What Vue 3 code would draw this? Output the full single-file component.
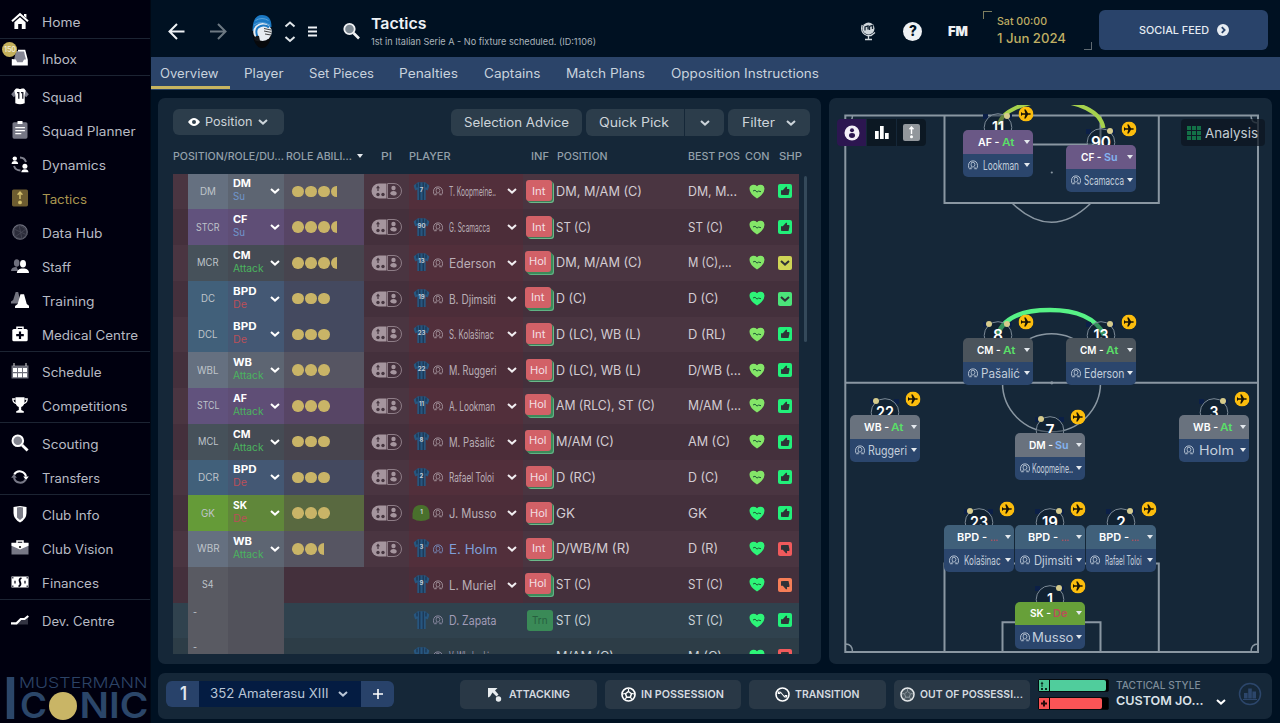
<script setup>
import { h } from "vue";

// Single-line label squeezed or stretched to a fixed width, like the names in the squad list
const FitText = (props) => {
  const size = Number(props.s || 13);
  const height = Math.round(size * 1.3);
  return h("svg", { class: "fit", width: props.w, height }, [
    h(
      "text",
      {
        x: 0,
        y: height / 2 + size * 0.36,
        "font-size": size,
        "font-weight": props.b || 400,
        textLength: props.w,
        lengthAdjust: "spacingAndGlyphs",
        fill: "currentColor",
      },
      props.t
    ),
  ]);
};
FitText.props = ["t", "w", "s", "b"];

const menu = [
  [{ t: "Home", w: 38.5, icon: "home" }],
  [{ t: "Inbox", w: 35, icon: "inbox", badge: "150" }],
  [
    { t: "Squad", w: 40, icon: "squad" },
    { t: "Squad Planner", w: 93.5, icon: "planner" },
    { t: "Dynamics", w: 64, icon: "dynamics" },
    { t: "Tactics", w: 45, icon: "tactics", active: true },
    { t: "Data Hub", w: 60.5, icon: "data" },
    { t: "Staff", w: 29, icon: "staff" },
    { t: "Training", w: 52.5, icon: "training" },
    { t: "Medical Centre", w: 96, icon: "medical" },
  ],
  [
    { t: "Schedule", w: 59.5, icon: "schedule" },
    { t: "Competitions", w: 85.5, icon: "trophy" },
  ],
  [
    { t: "Scouting", w: 56.5, icon: "search" },
    { t: "Transfers", w: 58, icon: "transfers" },
  ],
  [
    { t: "Club Info", w: 57.5, icon: "shield" },
    { t: "Club Vision", w: 71.5, icon: "vision" },
    { t: "Finances", w: 57, icon: "finances" },
  ],
  [{ t: "Dev. Centre", w: 72.5, icon: "dev" }],
];

const tabs = [
  { t: "Overview", w: 58.5, active: true },
  { t: "Player", w: 39.5 },
  { t: "Set Pieces", w: 65 },
  { t: "Penalties", w: 59 },
  { t: "Captains", w: 56.5 },
  { t: "Match Plans", w: 79 },
  { t: "Opposition Instructions", w: 148 },
];

const headers = [
  { t: "POSITION/ROLE/DU...", w: 111 },
  { t: "ROLE ABILI...", w: 66, sort: true },
  { t: "PI", w: 11 },
  { t: "PLAYER", w: 41.5 },
  { t: "INF", w: 18 },
  { t: "POSITION", w: 50.5 },
  { t: "BEST POS", w: 52 },
  { t: "CON", w: 24.5 },
  { t: "SHP", w: 23 },
];

const duties = { Su: 12, Attack: 30.5, De: 14 };
const infWidths = { Int: 13.5, Hol: 17.5, Trn: 15.5 };

const players = [
  { kind: "dm", pos: "DM", pw: 16, role: "DM", rw: 18, duty: "Su", stars: 3.5, no: 7, name: "T. Koopmeine..", nw: 47, inf: "Int", at: "DM, M/AM (C)", aw: 86, best: "DM, M...", bw: 49, con: "lime", shp: "up" },
  { kind: "st", pos: "STCR", pw: 23.5, role: "CF", rw: 14.5, duty: "Su", stars: 3.5, no: 90, name: "G. Scamacca", nw: 41, inf: "Int", at: "ST (C)", aw: 35, best: "ST (C)", bw: 35, con: "lime", shp: "up" },
  { kind: "cm", pos: "MCR", pw: 21.5, role: "CM", rw: 17.5, duty: "Attack", stars: 3.5, no: 13, name: "Ederson", nw: 47, inf: "Hol", deep: true, at: "DM, M/AM (C)", aw: 86, best: "M (C),...", bw: 43.5, con: "lime", shp: "flat" },
  { kind: "bpd", pos: "DC", pw: 14, role: "BPD", rw: 23.5, duty: "De", stars: 3, no: 19, name: "B. Djimsiti", nw: 47, inf: "Int", deep: true, at: "D (C)", aw: 30.5, best: "D (C)", bw: 30.5, con: "green", shp: "ok" },
  { kind: "bpd", pos: "DCL", pw: 19.5, role: "BPD", rw: 23.5, duty: "De", stars: 3, no: 23, name: "S. Kolašinac", nw: 45, inf: "Int", at: "D (LC), WB (L)", aw: 85, best: "D (RL)", bw: 38, con: "lime", shp: "up" },
  { kind: "dm", pos: "WBL", pw: 21.5, role: "WB", rw: 19, duty: "Attack", stars: 3, no: 22, name: "M. Ruggeri", nw: 47.5, inf: "Hol", at: "D (LC), WB (L)", aw: 85, best: "D/WB (...", bw: 53, con: "lime", shp: "up" },
  { kind: "st", pos: "STCL", pw: 22.5, role: "AF", rw: 14, duty: "Attack", stars: 3, no: 11, name: "A. Lookman", nw: 46, inf: "Hol", deep: true, at: "AM (RLC), ST (C)", aw: 99, best: "M/AM (...", bw: 53, con: "lime", shp: "up" },
  { kind: "cm", pos: "MCL", pw: 20.5, role: "CM", rw: 17.5, duty: "Attack", stars: 3, no: 8, name: "M. Pašalić", nw: 46, inf: "Hol", deep: true, at: "M/AM (C)", aw: 58, best: "AM (C)", bw: 42, con: "lime", shp: "up" },
  { kind: "bpd", pos: "DCR", pw: 21, role: "BPD", rw: 23.5, duty: "De", stars: 3, no: 2, name: "Rafael Toloi", nw: 45, inf: "Hol", at: "D (RC)", aw: 40, best: "D (C)", bw: 30.5, con: "lime", shp: "up" },
  { kind: "gk", pos: "GK", pw: 14, role: "SK", rw: 14, duty: "De", stars: 3, no: 1, name: "J. Musso", nw: 47.5, inf: "Hol", at: "GK", aw: 19, best: "GK", bw: 19, con: "green", shp: "up" },
  { kind: "dm", pos: "WBR", pw: 22.5, role: "WB", rw: 19, duty: "Attack", stars: 2.5, no: 3, name: "E. Holm", nw: 48.5, inf: "Int", at: "D/WB/M (R)", aw: 74, best: "D (R)", bw: 30, con: "green", shp: "down", loan: true },
  { kind: "sub", pos: "S4", pw: 11.5, no: 9, name: "L. Muriel", nw: 47, inf: "Hol", deep: true, at: "ST (C)", aw: 35, best: "ST (C)", bw: 35, con: "green", shp: "warn" },
  { kind: "sub", pos: "-", pw: 4, name: "D. Zapata", nw: 47.5, inf: "Trn", at: "ST (C)", aw: 35, best: "ST (C)", bw: 35, con: "green", shp: "up", out: true },
  { kind: "sub", pos: "-", pw: 4, name: "V. Włodarski", nw: 40, at: "M/AM (C)", aw: 58, best: "M (C)", bw: 34, con: "green", shp: "down", out: true },
];

const tokens = [
  { x: 963, y: 130, no: 11, nw: 12, kind: "st", role: "AF -", rw: 21.5, duty: "At", name: "Lookman", w: 36, dots: "r" },
  { x: 1066, y: 145, no: 90, nw: 20, kind: "st", role: "CF -", rw: 20.5, duty: "Su", name: "Scamacca", w: 40, dots: "r" },
  { x: 963, y: 338, no: 8, nw: 10, kind: "cm", role: "CM -", rw: 23.5, duty: "At", name: "Pašalić", w: 39, dots: "lr" },
  { x: 1066, y: 338, no: 13, nw: 15, kind: "cm", role: "CM -", rw: 23.5, duty: "At", name: "Ederson", w: 40.5, dots: "r" },
  { x: 850, y: 415, no: 22, nw: 18, kind: "dm", role: "WB -", rw: 25, duty: "At", name: "Ruggeri", w: 39, dots: "l" },
  { x: 1015, y: 433, no: 7, nw: 9, kind: "dm", role: "DM -", rw: 24, duty: "Su", name: "Koopmeine..", w: 41, dots: "l" },
  { x: 1179, y: 415, no: 3, nw: 9, kind: "dm", role: "WB -", rw: 25, duty: "At", name: "Holm", w: 35, dots: "r" },
  { x: 944, y: 525, no: 23, nw: 18, kind: "bpd", role: "BPD -", rw: 30, duty: "...", name: "Kolašinac", w: 36.5, dots: "l" },
  { x: 1015, y: 525, no: 19, nw: 16, kind: "bpd", role: "BPD -", rw: 30, duty: "...", name: "Djimsiti", w: 38.5, dots: "r" },
  { x: 1085.5, y: 525, no: 2, nw: 9.5, kind: "bpd", role: "BPD -", rw: 30, duty: "...", name: "Rafael Toloi", w: 36.5, dots: "r" },
  { x: 1015, y: 601.5, no: 1, nw: 6, kind: "gk", role: "SK -", rw: 21, duty: "De", name: "Musso", w: 41.5, dots: "r" },
];
const tokenDuty = { At: 12.5, Su: 13.5, De: 14.5, "...": 8 };
const dutyClass = { Su: "su", At: "at", Attack: "at", De: "de", "...": "de" };

const phases = [
  { t: "ATTACKING", w: 61, icon: "attack" },
  { t: "IN POSSESSION", w: 83, icon: "ball" },
  { t: "TRANSITION", w: 64.5, icon: "swap" },
  { t: "OUT OF POSSESSI...", w: 103, icon: "balldim" },
];
</script>

<template>
  <div class="app">
    <svg class="sprite" width="0" height="0">
      <symbol id="home" viewBox="0 0 18 18"><path d="M1 9.3 9 2.2l8 7.1" fill="none" stroke="#fff" stroke-width="2" /><path d="M13 2h2.4v4L13 4z" fill="#fff" /><path d="M3.4 10.2 9 5.3l5.6 4.9V17h-3.8v-5H7.2v5H3.4z" fill="#fff" /></symbol>
      <symbol id="inbox" viewBox="0 0 18 18"><path d="M5 2h8.500L15 11l-3 4H6l-3-4z" fill="#858694" /><path d="M7 .8h7.2l2.600 10v5.700H.8V10l4 .4 1.400 2.800h5.400l1.400-2.800h1.800L13 2.600H7z" fill="#fff" /></symbol>
      <symbol id="squad" viewBox="0 0 18 18"><path d="m4.5 2.2-4.3 5 2.6 3 2-2z" fill="#777887" /><path d="m13.5 2.2 4.3 5-2.6 3-2-2z" fill="#777887" /><path d="M5 1.4h2.2q1.8 1.2 3.6 0H13l1.7 2-1 4.6v8.2q-4.7 2-9.4 0V8l-1-4.6z" fill="#fff" /><path d="M6 5.7h1.8v6M10 5.7h1.8v6" fill="none" stroke="#191927" stroke-width="1.3" /></symbol>
      <symbol id="planner" viewBox="0 0 18 18"><rect x="1.5" y="1.2" width="15" height="16.5" rx="1.6" fill="#767785" /><path d="M6.5 0h5v3h-5zM4.3 6h9.6v1.3H4.3zM4.3 9h9.6v1.3H4.3zM4.3 12h6v1.3h-6z" fill="#fff" /></symbol>
      <symbol id="dynamics" viewBox="0 0 18 18"><path d="M9 2.5a6.5 6.5 0 0 1 6 4.5M9.5 15.5A6.8 6.8 0 0 1 3 11" fill="none" stroke="#7f808d" stroke-width="2" /><circle cx="3.8" cy="3.6" r="2.2" fill="#fff" /><path d="M.6 9q0-3 3.2-3t3.4 3zM10.3 17.2q.2-3 3.6-3t3.6 3z" fill="#fff" /><circle cx="13.9" cy="11.2" r="2.5" fill="#fff" /></symbol>
      <symbol id="tactics" viewBox="0 0 18 18"><rect x="1" y=".6" width="16" height="16.8" rx="1.6" fill="#6d5c30" /><path d="M9 10V4M6.6 5.7 9 3.2l2.4 2.5" fill="none" stroke="#d2be6c" stroke-width="1.5" /><circle cx="9" cy="13.4" r="1.9" fill="#d2be6c" /></symbol>
      <symbol id="data" viewBox="0 0 18 18"><circle cx="9" cy="9" r="7.2" fill="#2b2c3a" stroke="#6d6f7c" stroke-width="1.2" /><path d="m3 6 5-4 7 4 1 6-5 4-7-2zM8 2l3 14M3 6l13 6M15 6 4 14" fill="none" stroke="#474957" stroke-width=".8" /></symbol>
      <symbol id="staff" viewBox="0 0 18 18"><ellipse cx="5.7" cy="6" rx="2.8" ry="3.8" fill="#6f707e" /><path d="M0 14q0-4 5.5-4l2 4z" fill="#6f707e" /><ellipse cx="12" cy="6.8" rx="3" ry="3.8" fill="#fff" /><path d="M5.8 16q.4-3.5 4.7-4.4h3Q18 12.500 18 16z" fill="#fff" /></symbol>
      <symbol id="training" viewBox="0 0 20 18"><path d="M5.200 0h2.800l3 13H0v-2.400L2.400 9z" fill="#72737f" /><path d="M10.500 2.500h4l3 11 3 2.300V18H4.500v-2.200l2.900-2.300z" fill="#fff" /></symbol>
      <symbol id="medical" viewBox="0 0 18 18"><path d="M6 4.500V2.200h6v2.300" fill="none" stroke="#fff" stroke-width="1.500" /><rect x="1.300" y="4" width="15.400" height="12.300" rx="1.600" fill="#fff" /><path d="M7.900 6.500h2.200v2.600h2.700v2.200h-2.700v2.600H7.900v-2.600H5.200V9.100h2.700z" fill="#000010" /></symbol>
      <symbol id="schedule" viewBox="0 0 18 18"><path d="M.5 3.500h17v13H.5z" fill="#6d6e7a" /><path d="M3 1v3M15 1v3" stroke="#ddd" stroke-width="1" /><path d="M2 6h4v4H2zM7 6h4v4H7zM12 6h4v4h-4zM2 11.200h4v4H2zM7 11.200h4v4H7zM12 11.200h4v4h-4z" fill="#fff" /></symbol>
      <symbol id="trophy" viewBox="0 0 18 18"><path d="M4.500 1.300h9v4.200q0 4.300-3.300 5.500v3l2.600 1.300v1.500H5.200v-1.500l2.600-1.300v-3Q4.500 9.800 4.500 5.500z" fill="#fff" /><path d="M4.500 3H1.800q.2 4 3.700 4.500M13.500 3h2.700q-.2 4-3.700 4.500" fill="none" stroke="#fff" stroke-width="1.300" /></symbol>
      <symbol id="search" viewBox="0 0 18 18"><circle cx="6.800" cy="6.800" r="5.300" fill="#83858f" stroke="#fff" stroke-width="2" /><path d="m11 11 5.600 5.600" stroke="#fff" stroke-width="2.800" /></symbol>
      <symbol id="transfers" viewBox="0 0 18 18"><path d="M3.200 6.500A6.400 6.400 0 0 1 15 8.500" fill="none" stroke="#fff" stroke-width="2" /><path d="M12.200 8.500h5.600L15 12z" fill="#fff" /><path d="M14.800 11.500A6.400 6.400 0 0 1 3 9.500" fill="none" stroke="#777887" stroke-width="2" /><path d="M.2 9.800h5.600L3 6z" fill="#777887" /></symbol>
      <symbol id="shield" viewBox="0 0 18 18"><path d="M2.500 2 9 1l6.500 1v6q0 6-6.500 9.500Q2.500 14 2.500 8z" fill="#fff" /><path d="M6 2.500 9 2l3 .5v10L9 15l-3-2.500z" fill="#7c7d88" /></symbol>
      <symbol id="vision" viewBox="0 0 18 18"><path d="M6 4V2h6v2" fill="none" stroke="#fff" stroke-width="1.500" /><path d="M.5 4h17v11.500H.5z" fill="#777886" /><path d="M.5 3.800h17v3L9 10.500.5 6.800z" fill="#fff" /><circle cx="9" cy="8" r="1.100" fill="#111" /></symbol>
      <symbol id="finances" viewBox="0 0 18 18"><path d="M.5 3.500h17v11H.5z" fill="#fff" /><path d="M4 7.800v2.800M14 7.800v2.800" stroke="#000010" stroke-width="1.200" /><path d="M1 4h1.500v1.500H1zM15.500 4H17v1.500h-1.500zM1 12.500h1.500V14H1zM15.500 12.500H17V14h-1.500z" fill="#4c4d5a" /><path d="M10.500 5Q7.500 6 9 9t-1.500 4.500" fill="none" stroke="#000010" stroke-width="1.800" /></symbol>
      <symbol id="dev" viewBox="0 0 18 18"><path d="M2 13.500 9 10l8-5v8.500z" fill="#333442" /><path d="M0 12.300h5.500L9.800 8h3.700L17.300 5" fill="none" stroke="#fff" stroke-width="2.200" /></symbol>
      <symbol id="chev" viewBox="0 0 10 6"><path d="m1 1 4 3.600L9 1" fill="none" stroke="currentColor" stroke-width="2" /></symbol>
      <symbol id="person" viewBox="0 0 10 10"><path d="M1.200 8.500Q.5 7.500.5 5.500.8.900 5 .9t4.500 4.600q0 2-.7 3" fill="none" stroke="currentColor" stroke-width=".9" /><path d="M5 2.300q1.900.1 1.900 2.200T5 7.100 3.100 4.500 5 2.300z" fill="none" stroke="currentColor" stroke-width=".8" /><path d="M.9 9.200Q1.500 7.500 3.700 7v2.200zM9.100 9.200Q8.500 7.500 6.300 7v2.200z" fill="currentColor" opacity=".75" /></symbol>
      <symbol id="shirt" viewBox="0 0 16 20"><path d="M4.500 1.200h7L16 4.500 14.300 9.500l-2.100-1V19H3.800V8.500l-2.100 1L0 4.500z" fill="#27567f" /><path d="M6.300 1.500V19M9.700 1.500V19M3.500 2.500v4M12.500 2.500v4" stroke="#1b304a" stroke-width="1.100" /></symbol>
      <symbol id="gkshirt" viewBox="0 0 18 18"><path d="M.5 14.500V9.500Q1 1 9 1t8.500 8.500v5Q13.500 17 9 17T.5 14.500z" fill="#49702c" /></symbol>
      <symbol id="heart" viewBox="0 0 16 15"><path d="M8 14.500Q.5 9.500.5 4.700.6 1.200 4 .8 6.700.7 8 2.200 9.300.7 12 .8q3.400.4 3.500 3.900Q15.500 9.500 8 14.500z" fill="currentColor" /><path d="M4 7 6 6.200l2 1.900 1.600-1 2.400.6" fill="none" stroke="#1f5a36" stroke-width="1" /></symbol>
      <symbol id="thumb" viewBox="0 0 14 14"><path d="M3 6.300h1.800L8.200 2.500q1.500.4.700 2.600H11q.7.200.4 2L10.500 11H5.500L3 10.700z" fill="#2f3237" /></symbol>
      <symbol id="pi" viewBox="0 0 31 16"><path d="M15.500.5H8A7.500 7.500 0 0 0 8 15.500h7.500z" fill="#a5959e" /><path d="M16.500.5H23a7.500 7.500 0 0 1 0 15h-6.500z" fill="none" stroke="#8e7d87" /><g fill="#45353f"><path d="M7 2.500 9 5.300H5zM6.400 5h1.200v3H6.400z" /><circle cx="7" cy="11.500" r="1.700" /><circle cx="12" cy="11.500" r="1.700" /></g><circle cx="22.500" cy="5" r="2.200" fill="#a5959e" /><path d="M19.300 10.500q0-2.500 3.200-2.500t3.200 2.500-3.200 2-3.200-2z" fill="#a5959e" /></symbol>
      <symbol id="plane" viewBox="0 0 15 15"><circle cx="7.500" cy="7.500" r="7.500" fill="#fcbd0d" /><path d="M2.500 5.500 4 6.800h2.800L5.700 3h1.500L9.500 6.800h2.200q1.500.7 0 1.400H9.500L7.200 12H5.700l1.100-3.800H4L2.500 9.500z" fill="#171307" /></symbol>
      <symbol id="attack" viewBox="0 0 15 15"><path d="M1 1h9.500L8 3.500l3.500 4-2 2-4-4L3 9.500l-2 1z" fill="#e8ecef" /><circle cx="11.500" cy="12" r="2.700" fill="#e8ecef" /></symbol>
      <symbol id="ball" viewBox="0 0 15 15"><circle cx="7.500" cy="7.500" r="6.500" fill="#26343f" stroke="#fff" stroke-width="1.700" /><path d="m7.500 4.500 3 2.200-1.200 3.500H5.700L4.500 6.700z" fill="none" stroke="#fff" stroke-width="1.500" /><path d="M7.500 2v2M2 7l2-.5M13 7l-2-.5M4.300 12l1.200-1.700M10.700 12 9.500 10.300" stroke="#fff" stroke-width="1.200" /></symbol>
      <symbol id="swap" viewBox="0 0 15 15"><circle cx="7.500" cy="7.500" r="6.500" fill="none" stroke="#fff" stroke-width="1.600" /><path d="M3.500 6q1-1.800 2.300-.5l3.400 4q1.300 1.300 2.300-.5M3.300 4.500v2h2M11.700 10.500v-2h-2" fill="none" stroke="#fff" stroke-width="1.100" /></symbol>
      <symbol id="balldim" viewBox="0 0 15 15"><circle cx="7.500" cy="7.500" r="6.500" fill="#49565f" stroke="#e4e7e9" stroke-width="1.500" /><path d="m7.500 4.500 3 2.200-1.200 3.500H5.700L4.500 6.700zM7.500 2v2M2 7l2-.5M13 7l-2-.5M4.300 12l1.200-1.700M10.700 12 9.500 10.300" fill="none" stroke="#8d979e" stroke-width="1" /></symbol>
    </svg>

    <aside class="sidebar">
      <div v-for="(group, g) in menu" :key="g" class="menu-group">
        <div v-for="item in group" :key="item.t" class="menu-item" :class="{ active: item.active }">
          <span class="menu-icon">
            <svg width="18" height="18"><use :href="'#' + item.icon" /></svg>
            <span v-if="item.badge" class="menu-badge"><FitText :t="item.badge" w="12" s="7" b="600" /></span>
          </span>
          <FitText :t="item.t" :w="item.w" s="12.800" />
        </div>
      </div>
      <svg class="brand" width="150" height="54" viewBox="0 669 150 54">
        <text x="3.500" y="718.500" font-size="57.500" font-weight="700" fill="#2b4669" textLength="14" lengthAdjust="spacingAndGlyphs">I</text>
        <text x="19" y="687.500" font-size="15" font-weight="300" fill="#2c4366" textLength="128.500" lengthAdjust="spacingAndGlyphs">MUSTERMANN</text>
        <text x="20" y="718" font-size="35" font-weight="600" fill="#2b4669" textLength="27" lengthAdjust="spacingAndGlyphs">C</text>
        <circle cx="63" cy="706" r="14" fill="#c9b566" />
        <text x="79.500" y="718" font-size="35" font-weight="600" fill="#2b4669" textLength="69" lengthAdjust="spacingAndGlyphs">NIC</text>
      </svg>
    </aside>

    <div class="main">
      <header class="topbar">
        <svg class="nav" width="220" height="56" viewBox="151 0 220 56">
          <g fill="none" stroke-width="2">
            <path d="M184.500 31.500H170M177 24l-7.500 7.500L177 39" stroke="#eef2f5" />
            <path d="M210 31.500h15M218 24l7.500 7.500L218 39" stroke="#6c7882" />
            <path d="m285.500 26.500 4.500-4 4.500 4M285.500 37l4.500 4 4.500-4" stroke="#dfe5e9" />
            <path d="M308 27.500h9M308 31.500h9M308 35.500h9" stroke="#eef2f5" />
          </g>
          <!-- club crest -->
          <ellipse cx="262" cy="31.500" rx="9.500" ry="16.500" fill="#07090c" />
          <path d="M252.500 31q0-16 9.500-16t9.500 12z" fill="#1b79c4" />
          <path d="M255.500 20.500q6.500-4 13 0M254 25q7-5 16 0" fill="none" stroke="#58a2da" stroke-width="1" />
          <ellipse cx="262.500" cy="32" rx="9.300" ry="9" fill="#e8edf2" />
          <path d="M258 38q-5-11 5-12.500 4-.3 6 2" fill="none" stroke="#1b79c4" stroke-width="2" />
          <path d="M264 28.500l7 1.500M264 31l7.500 1.500M265 34l6 1" stroke="#444" stroke-width="1" />
          <path d="M254 39q1.500-4 5-3l1 5q-4 1-6-2z" fill="#15171a" />
          <circle cx="349.500" cy="29" r="5.200" fill="#7b8791" stroke="#f0f2f4" stroke-width="1.800" />
          <path d="m353.500 33 5.500 5.500" stroke="#f0f2f4" stroke-width="2.600" />
        </svg>
        <div class="title">
          <FitText t="Tactics" w="55.500" s="15" b="600" />
          <FitText class="subtitle" t="1st in Italian Serie A - No fixture scheduled. (ID:1106)" w="225" s="9.300" />
        </div>
        <div class="status">
          <svg width="16" height="20" viewBox="1 0 16 20"><circle cx="9.500" cy="7.500" r="6" fill="#cfd6db" /><path d="M3.200 4Q1 12 8 14.500h4l4-3M9.500 15v3.500M6 18.500h7" fill="none" stroke="#cfd6db" stroke-width="1.300" /><path d="M6 9.500V6l3-1v3.500M10.500 9V5.500l3-1V8" fill="none" stroke="#142433" stroke-width="1.300" /></svg>
          <span class="help"><FitText t="?" w="8" s="14" b="800" /></span>
          <FitText t="FM" w="20" s="12.500" b="900" />
        </div>
        <div class="date">
          <FitText t="Sat 00:00" w="50" s="10.300" b="500" />
          <FitText t="1 Jun 2024" w="69" s="12.800" b="500" />
        </div>
        <div class="social">
          <FitText t="SOCIAL FEED" w="70" s="10.500" b="500" />
          <svg width="12" height="12" viewBox="0 0 12 12"><circle cx="6" cy="6" r="6" fill="#e6ecf2" /><path d="m4.800 3.200 2.800 2.800-2.800 2.800" fill="none" stroke="#29436a" stroke-width="1.800" /></svg>
        </div>
      </header>

      <nav class="tabs">
        <div v-for="tab in tabs" :key="tab.t" class="tab" :class="{ active: tab.active }">
          <FitText :t="tab.t" :w="tab.w" s="12.700" />
        </div>
      </nav>

      <div class="panels">
        <section class="panel squad">
          <div class="toolbar">
            <div class="btn position">
              <svg width="12" height="8" viewBox="0 0 12 8"><path d="M0 4q6-8 12 0-6 8-12 0z" fill="#fff" /><circle cx="6" cy="4" r="2" fill="#31414e" /></svg>
              <FitText t="Position" w="47.500" s="12" />
              <svg width="10" height="6"><use href="#chev" /></svg>
            </div>
            <div class="btn advice"><FitText t="Selection Advice" w="105" s="12.800" /></div>
            <div class="btn pick">
              <span class="pick-label"><FitText t="Quick Pick" w="70" s="12.800" /></span>
              <span class="pick-arrow"><svg width="10" height="6"><use href="#chev" /></svg></span>
            </div>
            <div class="btn filter">
              <FitText t="Filter" w="33" s="12.800" />
              <svg width="10" height="6"><use href="#chev" /></svg>
            </div>
          </div>

          <div class="table-head">
            <span v-for="(head, i) in headers" :key="i" class="head-cell">
              <FitText :t="head.t" :w="head.w" s="10.300" b="500" />
              <i v-if="head.sort" class="caret"></i>
            </span>
          </div>

          <div class="table-area">
            <div class="table">
              <div v-for="(p, i) in players" :key="i" class="row" :class="[p.kind, { out: p.out }]">
                <span></span>
                <span class="pos"><FitText :t="p.pos" :w="p.pw" s="10" /></span>
                <span class="role">
                  <span v-if="p.role" class="role-text">
                    <FitText :t="p.role" :w="p.rw" s="10.500" b="700" />
                    <FitText :class="dutyClass[p.duty]" :t="p.duty" :w="duties[p.duty]" s="9.800" />
                  </span>
                  <svg v-if="p.role" width="10" height="6"><use href="#chev" /></svg>
                </span>
                <span class="ability">
                  <template v-if="p.stars">
                    <i v-for="n in Math.floor(p.stars)" :key="n" class="star"></i>
                    <i v-if="p.stars % 1" class="star half"></i>
                  </template>
                </span>
                <span class="pi"><svg v-if="p.role" width="31" height="16"><use href="#pi" /></svg></span>
                <span class="player" :class="{ loan: p.loan }">
                  <svg class="kit" width="19" height="20">
                    <use v-if="p.kind === 'gk'" href="#gkshirt" width="18" height="18" y="1" />
                    <use v-else href="#shirt" width="16" height="20" x="1.500" />
                    <text v-if="p.no" x="9.500" y="11" text-anchor="middle" font-size="6" font-weight="700" fill="#c3ccd6">{{ p.no }}</text>
                  </svg>
                  <svg class="face" width="10" height="10"><use href="#person" /></svg>
                  <span class="name"><FitText :t="p.name" :w="p.nw" s="12.500" /></span>
                  <svg v-if="!p.out" class="open" width="10" height="6"><use href="#chev" /></svg>
                </span>
                <span class="inf"><span v-if="p.inf" class="tag" :class="[p.inf.toLowerCase(), { deep: p.deep }]"><FitText :t="p.inf" :w="infWidths[p.inf]" s="10.800" /></span></span>
                <span><FitText :t="p.at" :w="p.aw" s="12.800" /></span>
                <span><FitText :t="p.best" :w="p.bw" s="12.800" /></span>
                <span class="con" :class="p.con"><svg width="16" height="15"><use href="#heart" /></svg></span>
                <span class="shp">
                  <span class="sharp" :class="p.shp">
                    <svg v-if="p.shp === 'flat' || p.shp === 'ok'" width="10" height="6"><use href="#chev" /></svg>
                    <svg v-else width="14" height="14"><use href="#thumb" /></svg>
                  </span>
                </span>
              </div>
            </div>
            <div class="scrollbar"></div>
          </div>
        </section>

        <section class="panel pitch">
          <svg class="field" width="443" height="566" viewBox="829 98 443 566">
            <g fill="none" stroke="#8a97a2" stroke-width="2">
              <rect x="845.300" y="115.500" width="412.700" height="536.500" />
              <path d="M845 382.800h413M944.500 115.500V203h214.300v-87.500M1002.500 115.500v29h98v-29M944.500 652v-88.500h214.300V652M1002.500 652v-29.700h98V652" />
              <circle cx="1051.500" cy="382.800" r="49" stroke-width="1.500" />
              <path d="M1012.500 203.500q39 37.500 78 0M845.500 644q7 0 7 8M1258 644q-7 0-7 8M1258 123q-7 0-7-7.500M845.500 123q7 0 7-7.500" stroke-width="1.500" />
            </g>
            <circle cx="1051.800" cy="172.500" r="1.100" fill="#8a97a2" />
            <circle cx="1051.800" cy="382.800" r="1.600" fill="#8a97a2" />
            <clipPath id="arcs"><rect x="829" y="105" width="443" height="300" /></clipPath>
            <path d="M999 125c2-14 26-24 52-24s50 10 52.500 27" fill="none" stroke="#a6d24d" stroke-width="4" clip-path="url(#arcs)" />
            <path d="M998 334c6-17 26-24 52-24s46 8 54 25" fill="none" stroke="#57f286" stroke-width="4.500" />
          </svg>

          <div class="view-modes">
            <span class="mode on"><svg width="16" height="16" viewBox="0 0 16 16"><circle cx="8" cy="8" r="7.500" fill="#f3eff7" /><circle cx="8" cy="5.200" r="2" fill="#2c1650" /><ellipse cx="8" cy="10.500" rx="3" ry="2.400" fill="#2c1650" /></svg></span>
            <span class="mode"><svg width="14" height="13" viewBox="0 0 14 13"><path d="M0 5h3.700v8H0zM5 0h3.700v13H5zM10 7h3.700v6H10z" fill="#fff" /></svg></span>
            <span class="mode"><svg width="17" height="17" viewBox="0 0 17 17"><rect width="17" height="17" rx="2" fill="#92979c" /><path d="M8.500 10V4M6.500 5.300l2-2.300 2 2.300" fill="none" stroke="#fff" stroke-width="1.400" /><circle cx="8.500" cy="12.800" r="1.500" fill="#fff" /></svg></span>
          </div>

          <div class="analysis">
            <svg width="14" height="14" viewBox="0 0 14 14"><path d="M0 0h4v4H0zM5 0h4v4H5zM10 0h4v4h-4zM0 5h4v4H0zM5 5h4v4H5zM10 5h4v4h-4zM0 10h4v4H0zM5 10h4v4H5zM10 10h4v4h-4z" fill="#137047" /></svg>
            <FitText t="Analysis" w="53" s="13" />
          </div>

          <div v-for="(t, i) in tokens" :key="i" class="token" :class="t.kind" :style="{ left: t.x - 829 + 'px', top: t.y - 98 - 24 + 'px' }">
            <svg class="disc" width="72" height="38">
              <rect x="20" y="8" width="5" height="5" fill="#0b1f47" />
              <rect x="44" y="8" width="5" height="5" fill="#0b1f47" />
              <circle cx="35" cy="21.500" r="13.800" fill="rgba(14, 29, 44, 0.45)" stroke="#7c8a97" stroke-width="1" />
              <circle v-if="t.dots.includes('l')" cx="26" cy="10" r="3" fill="#d6cb8c" />
              <circle v-if="t.dots.includes('r')" cx="44" cy="10" r="3" fill="#d6cb8c" />
              <text :x="35 - t.nw / 2" y="27" font-size="15.500" font-weight="600" fill="#fff" :textLength="t.nw" lengthAdjust="spacingAndGlyphs">{{ t.no }}</text>
              <use href="#plane" x="55.500" y=".5" width="15" height="15" />
            </svg>
            <div class="card">
              <div class="card-role">
                <span class="card-label">
                  <FitText :t="t.role" :w="t.rw" s="10.500" b="600" />
                  <FitText :class="dutyClass[t.duty]" :t="t.duty" :w="tokenDuty[t.duty]" s="10.500" b="600" />
                </span>
                <i class="caret"></i>
              </div>
              <div class="card-name">
                <svg width="10" height="10"><use href="#person" /></svg>
                <span class="card-label"><FitText :t="t.name" :w="t.w" s="12.500" /></span>
                <i class="caret"></i>
              </div>
            </div>
          </div>
        </section>
      </div>

      <footer class="panel bottom">
        <div class="tactic">
          <span class="slot"><FitText t="1" w="7" s="18" b="600" /></span>
          <span class="tactic-name">
            <FitText t="352 Amaterasu XIII" w="118.500" s="12.800" />
            <svg width="10" height="6"><use href="#chev" /></svg>
          </span>
          <span class="add"><svg width="10" height="10" viewBox="0 0 10 10"><path d="M5 0v10M0 5h10" stroke="#fff" stroke-width="1.600" /></svg></span>
        </div>
        <div class="phases">
          <div v-for="phase in phases" :key="phase.t" class="phase">
            <svg width="15" height="15"><use :href="'#' + phase.icon" /></svg>
            <FitText :t="phase.t" :w="phase.w" s="10.500" b="600" />
          </div>
        </div>
        <div class="meters">
          <div class="meter good"><svg width="10" height="11" viewBox="0 0 10 11"><path d="M3 1.500 4.500 4h-1v3h-1V4h-1zM2 8h2v2H2zM6 8h2v2H6z" fill="#0b2b20" /></svg><i></i></div>
          <div class="meter bad"><svg width="10" height="11" viewBox="0 0 10 11"><path d="M4 2.500h2v2h2v2H6v2H4v-2H2v-2h2z" fill="#260909" /></svg><i></i></div>
        </div>
        <div class="style-box">
          <FitText class="style-label" t="TACTICAL STYLE" w="84.500" s="10.500" b="500" />
          <FitText t="CUSTOM JO..." w="87.500" s="12.200" b="600" />
        </div>
        <svg class="style-open" width="10" height="6"><use href="#chev" /></svg>
        <svg class="stats" width="24" height="24" viewBox="0 0 24 24"><circle cx="12" cy="12" r="10.500" fill="none" stroke="#2c466b" stroke-width="1.500" /><path d="M6 11h3.600v5.500H6zM10.200 6.500h3.600v10h-3.600zM14.400 9.500H18v7h-3.600zM5 17h14v1H5z" fill="#2c466b" /></svg>
      </footer>
    </div>
  </div>
</template>

<style>
body {
  background: #001122;
}
.fit {
  display: block;
  flex: none;
  overflow: visible;
}
</style>

<style scoped>
.app {
  display: flex;
  width: 1280px;
  height: 723px;
  overflow: hidden;
  background: #001122;
  color: #ccd4da;
  font-family: Inter, "Open Sans", sans-serif;
}
.app svg {
  flex: none;
}
.sprite {
  position: absolute;
}

/* sidebar */
.sidebar {
  display: flex;
  flex-direction: column;
  width: 151px;
  height: 723px;
  box-sizing: border-box;
  padding-top: 1px;
  background: #00000f;
  color: #b7bac3;
  border-right: 1px solid #000814;
}
.menu-group {
  padding-top: 2.5px;
  border-bottom: 1px solid #1c2433;
}
.menu-group:nth-last-of-type(1) {
  border-bottom: 0;
}
.menu-item {
  display: flex;
  align-items: center;
  gap: 12.500px;
  height: 34px;
  box-sizing: border-box;
  padding: 3px 0 0 11px;
}
.menu-item.active {
  color: #a8954f;
}
.menu-icon {
  position: relative;
  display: flex;
  margin-top: -3px;
}
.menu-badge {
  position: absolute;
  left: -9px;
  top: -7px;
  display: flex;
  align-items: center;
  justify-content: center;
  width: 15px;
  height: 15px;
  border-radius: 50%;
  background: #c4b05c;
  color: #f2ecd2;
}
.brand {
  margin-top: auto;
  overflow: visible;
}

/* top bar */
.main {
  display: flex;
  flex-direction: column;
  width: 1129px;
}
.topbar {
  display: flex;
  height: 57px;
}
.title {
  display: flex;
  flex-direction: column;
  gap: 2px;
  width: 489px;
  padding-top: 14px;
  color: #eef2f5;
}
.subtitle {
  color: #aab4bc;
}
.status {
  display: flex;
  align-items: center;
  gap: 26px;
  height: 62px;
  width: 123px;
  color: #eef1f4;
}
.status svg:first-child {
  margin-right: 1px;
}
.help {
  display: flex;
  align-items: center;
  justify-content: center;
  width: 19px;
  height: 19px;
  border-radius: 50%;
  background: #eef1f4;
  color: #001122;
}
.help svg:first-child {
  margin-right: 0;
}
.date {
  display: flex;
  flex-direction: column;
  gap: 2px;
  width: 109px;
  height: 39px;
  margin-top: 11px;
  margin-right: 7px;
  box-sizing: border-box;
  padding: 4px 0 0 14px;
  color: #bfae63;
  background: linear-gradient(#7d7d5f, #7d7d5f) 0 0 / 9px 1px no-repeat, linear-gradient(#7d7d5f, #7d7d5f) 0 0 / 1px 8px no-repeat,
    linear-gradient(#5f6a72, #5f6a72) 100% 100% / 8px 1px no-repeat, linear-gradient(#5f6a72, #5f6a72) 100% 100% / 1px 8px no-repeat;
}
.social {
  display: flex;
  align-items: center;
  justify-content: center;
  gap: 8px;
  width: 168px;
  height: 40px;
  margin-top: 10px;
  padding-left: 1px;
  border-radius: 6px;
  background: #29436a;
  color: #e6ecf2;
}

.tabs {
  display: flex;
  height: 33px;
  background: #2b4469;
  color: #c8d2dd;
}
.tab {
  display: flex;
  align-items: center;
  height: 32px;
  padding: 4px 12.800px 0;
  border-bottom: 3px solid transparent;
  box-sizing: border-box;
}
.tab.active {
  padding: 4px 11.500px 0 9px;
  margin-right: 1px;
  border-bottom-color: #c8b560;
}

/* squad list */
.panels {
  display: flex;
  gap: 8px;
  margin: 8px 8px 9px 7px;
}
.panel {
  border-radius: 7px;
  background: #152738;
}
.squad {
  width: 663px;
  height: 566px;
}
.toolbar {
  display: flex;
  gap: 4px;
  padding: 11px 11px 0 15px;
}
.btn {
  display: flex;
  align-items: center;
  height: 27px;
  border-radius: 6px;
  background: #2c3d4b;
}
.btn.position {
  gap: 5px;
  width: 111px;
  height: 26px;
  box-sizing: border-box;
  padding-left: 15px;
  margin-right: auto;
}
.btn.advice {
  width: 131px;
  justify-content: center;
}
.pick-label {
  width: 85px;
  padding-left: 13px;
}
.pick-arrow {
  display: flex;
  align-items: center;
  justify-content: center;
  width: 39px;
  height: 27px;
  border-left: 1px solid #152738;
}
.btn.filter {
  gap: 11px;
  width: 82px;
  justify-content: center;
}
.table-head {
  display: grid;
  grid-template-columns: 112.500px 95.500px 27.500px 122px 26px 131px 57px 34px 22px;
  align-items: center;
  height: 34.500px;
  padding: 3px 0 0 15px;
  color: #93a0aa;
}
.head-cell {
  display: flex;
  align-items: center;
  gap: 5px;
}
.caret {
  width: 0;
  height: 0;
  border: 3.500px solid transparent;
  border-top: 4px solid #e4e9ee;
  border-bottom: 0;
}
.table-area {
  display: flex;
  gap: 5px;
  padding-left: 15px;
}
.table {
  width: 626px;
  height: 480px;
  overflow: hidden;
}
.scrollbar {
  width: 3px;
  height: 166px;
  margin-top: 2px;
  border-radius: 2px;
  background: #34495a;
}
.row {
  display: grid;
  grid-template-columns: 15px 40px 56px 80px 45px 114px 33px 132px 53px 31px 27px;
  height: 35.750px;
  background: #4a3541;
  color: #d3ccd2;
}
.row:nth-child(even) {
  background: #44303c;
}
.row.out,
.row.out .player {
  background: #30424e;
  color: #cbd3d8;
}
.row.out .player {
  color: #a39db8;
}
.row.out:nth-child(even),
.row.out:nth-child(even) .player {
  background: #2d3d47;
}
.row > span {
  display: flex;
  align-items: center;
}
.row .pos {
  justify-content: center;
  background: var(--a);
  color: #bfc4ca;
}
.row .role {
  justify-content: space-between;
  padding: 0 4px 0 4.500px;
  background: var(--b);
  color: #fff;
}
.role-text {
  display: flex;
  flex-direction: column;
  margin-top: -3px;
}
.row .ability {
  gap: 1.500px;
  padding-left: 8px;
  background: var(--c);
}
.dm {
  --a: #657080;
  --b: #5d6572;
  --c: #565562;
  --card: #69727e;
}
.st {
  --a: #61527d;
  --b: #5f4e76;
  --c: #574565;
  --card: #6a5886;
}
.cm {
  --a: #46515a;
  --b: #454b54;
  --c: #47444e;
  --card: #4b545c;
}
.bpd {
  --a: #41607a;
  --b: #445874;
  --c: #44495f;
  --card: #40607a;
}
.gk {
  --a: #659b38;
  --b: #60873a;
  --c: #596940;
  --card: #67a039;
}
.sub {
  --a: #595a62;
  --b: #52525b;
}
.out .pos {
  align-items: flex-start !important;
  justify-content: flex-start !important;
  padding: 3px 0 0 5px;
}
.su {
  color: #7096cc;
}
.at {
  color: #4bb45e;
}
.de {
  color: #b94f59;
}
.star {
  width: 11.600px;
  height: 11.600px;
  border-radius: 50%;
  background: #c9b467;
}
.star.half {
  width: 5.800px;
  border-radius: 6px 0 0 6px;
}
.row .pi {
  padding-left: 7px;
}
.row .player {
  background: #522f3b;
  color: #b9adb5;
}
.row:nth-child(even) .player {
  background: #4c2d39;
}
.row .player.loan {
  color: #7f9fd8;
}
.kit {
  margin-left: 2.500px;
  margin-top: -1px;
}
.face {
  margin: 0 6px 0 2px;
  opacity: 0.85;
}
.name {
  width: 58px;
}
.open {
  color: #f2eef1;
}
.row .inf {
  padding-left: 3px;
}
.tag {
  display: flex;
  align-items: center;
  justify-content: center;
  width: 26px;
  height: 21px;
  margin-top: -1px;
  border-radius: 3px;
  background: #d26167;
  box-shadow: 1px 1px 0 #3f7c58, 2px 2px 0 #6cb98a;
  color: #f3dfe3;
}
.tag.deep {
  margin-top: -3px;
  margin-left: -1px;
  box-shadow: 1px 1px 0 #3c8a5a, 2px 2px 0 #3c8a5a, 3px 3px 0 #5fb384;
}
.tag.trn {
  margin: 0 0 0 1px;
  background: #3a8a57;
  box-shadow: none;
  color: #27603f;
}
.row .con {
  justify-content: center;
}
.con.lime {
  color: #84e668;
}
.con.green {
  color: #2df578;
}
.row .shp {
  justify-content: center;
}
.sharp {
  display: flex;
  align-items: center;
  justify-content: center;
  width: 14px;
  height: 14px;
  margin-right: 1.500px;
  border-radius: 2px;
  background: #22f07a;
  color: #2f3237;
}
.sharp.flat {
  background: #cfd556;
}
.sharp.ok {
  background: #4be57a;
}
.sharp.down {
  background: #f05a5c;
}
.sharp.warn {
  background: #f77e57;
}
.sharp.down svg,
.sharp.warn svg {
  transform: scaleY(-1);
}

/* pitch */
.pitch {
  position: relative;
  width: 443px;
  height: 566px;
}
.field {
  display: block;
}
.view-modes {
  position: absolute;
  left: 8px;
  top: 21px;
  display: flex;
  gap: 1px;
  border-radius: 4px;
  overflow: hidden;
}
.mode {
  display: flex;
  align-items: center;
  justify-content: center;
  width: 29px;
  height: 27px;
  background: rgba(10, 22, 32, 0.85);
}
.mode.on {
  background: #2c1650;
}
.analysis {
  position: absolute;
  left: 352px;
  top: 21px;
  display: flex;
  align-items: center;
  gap: 4px;
  width: 84px;
  height: 27px;
  box-sizing: border-box;
  padding: 1px 0 0 6px;
  border-radius: 4px;
  background: rgba(12, 22, 32, 0.75);
  color: #c3ccd3;
}
.token {
  position: absolute;
  width: 70px;
}
.disc {
  display: block;
  margin-bottom: -14px;
}
.card {
  position: relative;
  border-radius: 5px;
  overflow: hidden;
  color: #fff;
}
.card-role,
.card-name {
  display: flex;
  align-items: center;
  height: 23.500px;
  padding: 0 3px 0 4.500px;
}
.card-role {
  padding-left: 6px;
  background: var(--card);
}
.card-name {
  background: #2b466d;
  color: #c3cedb;
}
.card-label {
  display: flex;
  flex: 1;
  gap: 2.500px;
  justify-content: center;
}
.card .caret {
  border-width: 4px 3px 0;
}
.card .at {
  color: #5ade68;
}
.card .su {
  color: #83b4f2;
}

/* bottom bar */
.bottom {
  display: flex;
  align-items: center;
  height: 46px;
  margin: 0 8px 0 7px;
}
.tactic {
  display: flex;
  height: 26px;
  margin: -5px 66px 0 8px;
  border-radius: 6px;
  overflow: hidden;
  color: #dfe6ee;
}
.slot,
.add {
  display: flex;
  align-items: center;
  justify-content: center;
  width: 33px;
  background: #28426a;
}
.slot {
  width: 32px;
  padding-left: 1px;
}
.tactic-name {
  display: flex;
  align-items: center;
  gap: 9px;
  width: 151px;
  padding-left: 11px;
  background: #041c42;
  color: #b9c5d6;
}
.phases {
  display: flex;
  gap: 8px;
}
.phase {
  display: flex;
  align-items: center;
  justify-content: center;
  gap: 5px;
  width: 136.500px;
  height: 29px;
  margin-top: -4px;
  border-radius: 5px;
  background: #293846;
  color: #d5dbe0;
}
.phase:first-child {
  gap: 7px;
}
.meters {
  display: flex;
  flex-direction: column;
  gap: 5px;
  margin: -3px 7px 0 8px;
}
.meter {
  display: flex;
  width: 69px;
  height: 11px;
  border: 1px solid #050a0e;
  border-radius: 2px;
  background: #000;
}
.meter.good svg {
  background: #4bc795;
}
.meter.bad svg {
  background: #f95254;
}
.meter i {
  width: 56px;
  margin-left: 1px;
  border-radius: 0 2px 2px 0;
  background: #50cd9c;
}
.meter.bad i {
  width: 52px;
  background: #fb5456;
}
.style-box {
  display: flex;
  flex-direction: column;
  gap: 1px;
  width: 100px;
  margin-top: -6px;
  color: #dbe2e8;
}
.style-label {
  color: #7d8d9a;
}
.style-open {
  color: #fff;
  margin-top: 11px;
}
.stats {
  margin-left: 12px;
  margin-top: -4px;
}
</style>
